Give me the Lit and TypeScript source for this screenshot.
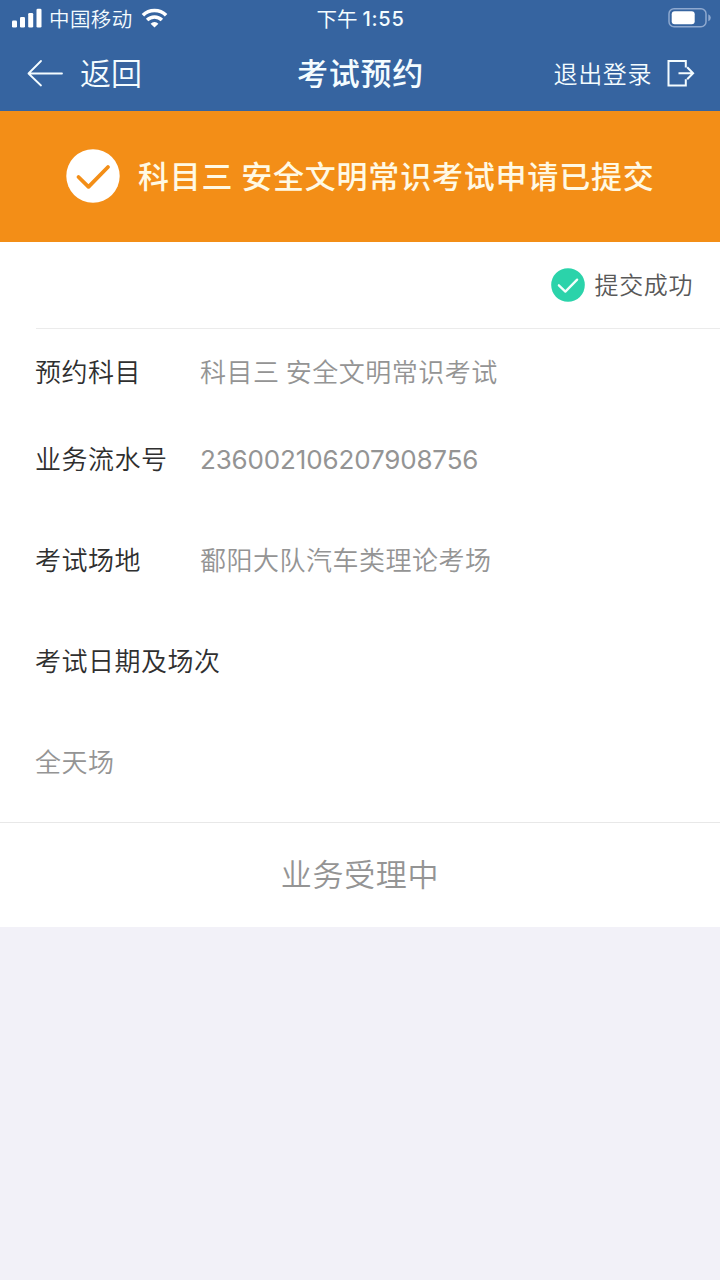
import { LitElement, html, css, svg } from "lit";
import { customElement } from "lit/decorators.js";

const rows = [
  { label: "预约科目", value: "科目三 安全文明常识考试", kind: "first" },
  { label: "业务流水号", value: "236002106207908756", kind: "number" },
  { label: "考试场地", value: "鄱阳大队汽车类理论考场", kind: "" },
  { label: "考试日期及场次", value: "", kind: "" },
];

@customElement("app-root")
export class AppRoot extends LitElement {
  static styles = css`
    :host {
      display: block;
      min-height: 1280px;
      background: #f2f1f8;
      font-family: "Noto Sans CJK SC", sans-serif;
      color: #2f2f2f;
    }
    * { box-sizing: border-box; }
    svg { display: block; flex: none; }
    .top { background: #3664a0; color: #f4fcff; height: 111px; }
    .status {
      height: 36px;
      display: grid;
      grid-template-columns: 1fr auto 1fr;
      align-items: center;
      padding: 0 9px 0 12px;
      font-size: 20.5px;
      line-height: 34px;
    }
    .carrier { display: flex; align-items: center; gap: 7px; }
    .carrier span { letter-spacing: 0.4px; font-weight: 350; padding-bottom: 1px; }
    .carrier .wifi { margin-left: 1px; }
    .time { display: flex; align-items: center; gap: 5px; padding-right: 2px; }
    .time span:first-child { padding-bottom: 1px; }
    .digits { font: 500 20px/34px Inter, sans-serif; letter-spacing: 0.7px; padding-top: 1px; }
    .status .battery { justify-self: end; }
    .nav {
      height: 75px;
      display: grid;
      grid-template-columns: 1fr auto 1fr;
      align-items: center;
      padding: 0 25px 2px 27px;
    }
    .back { display: flex; align-items: center; gap: 17px; font-size: 31px; line-height: 40px; font-weight: 350; }
    .title { font-size: 31px; line-height: 40px; font-weight: 500; letter-spacing: 0.7px; padding: 0 1px 2px 0; }
    .back span { padding-bottom: 2px; }
    .logout {
      display: flex; align-items: center; justify-content: flex-end; gap: 14px;
      font-size: 24px; line-height: 36px; letter-spacing: 0.6px; font-weight: 350;
    }
    .banner {
      height: 131px;
      background: #f38e17;
      color: #fff9e4;
      display: flex;
      align-items: center;
      padding-left: 66px;
      padding-bottom: 1px;
      gap: 18px;
      font-size: 31px;
      line-height: 44px;
      font-weight: 500;
      letter-spacing: 0.8px;
      white-space: nowrap;
    }
    .banner span { padding-bottom: 3px; }
    .card { background: #fff; height: 685px; }
    .result {
      height: 87px;
      margin-left: 36px;
      padding-right: 27px;
      border-bottom: 1px solid #ebebeb;
      display: flex;
      align-items: center;
      justify-content: flex-end;
      gap: 10px;
      color: #585858;
      font-size: 24px;
      line-height: 36px;
      letter-spacing: 0.6px;
      font-weight: 350;
    }
    .result span { padding-bottom: 2px; }
    .row {
      height: 101px;
      padding: 0 0 2px 35px;
      display: flex;
      align-items: center;
      font-size: 26px;
      line-height: 36px;
      letter-spacing: 0.5px;
      font-weight: 350;
      white-space: nowrap;
    }
    .row.first { height: 86px; }
    .row.number { height: 87px; margin-bottom: 7px; }
    .label { min-width: 165px; }
    .value, .session { color: #949494; }
    .row.number .value { font: 400 26px/36px Inter, sans-serif; letter-spacing: -0.15px; padding-top: 4px; }
    .foot {
      border-top: 1px solid #e8e8e8;
      height: 105px;
      margin-top: 10px;
      text-align: center;
      color: #949494;
      font-size: 31px;
      line-height: 100px;
      letter-spacing: 0.7px;
      font-weight: 350;
    }
  `;

  private check(size: number, disc: string, stroke: string, d: string, w: number) {
    return svg`<svg width=${size} height=${size} viewBox="0 0 54 54" fill="none">
      <circle cx="27" cy="27" r="26.7" fill=${disc} />
      <path d=${d} stroke=${stroke} stroke-width=${w} stroke-linecap="round" stroke-linejoin="round" />
    </svg>`;
  }

  render() {
    return html`
      <header class="top">
        <div class="status">
          <div class="carrier">
            <svg width="30" height="20" viewBox="0 0 30 20" fill="#fff">
              <rect x="0" y="12.5" width="5" height="7" rx="1.3" />
              <rect x="8" y="9" width="5" height="10.5" rx="1.3" />
              <rect x="16.2" y="5" width="5" height="14.5" rx="1.3" />
              <rect x="24.5" y="0.7" width="5" height="18.8" rx="1.3" />
            </svg>
            <span>中国移动</span>
            <svg class="wifi" width="27" height="20" viewBox="0 0 27 20" fill="none" stroke="#fff">
              <path d="M1.9 7.2a16.6 16.6 0 0 1 23.2 0" stroke-width="3.6" />
              <path d="M6.1 12a10.5 10.5 0 0 1 14.8 0" stroke-width="3.4" />
              <path d="M9.6 15.7a5.6 5.6 0 0 1 7.8 0L13.5 19.6z" fill="#fff" stroke="none" />
            </svg>
          </div>
          <div class="time"><span>下午</span><span class="digits">1:55</span></div>
          <svg class="battery" width="43" height="20" viewBox="0 0 43 20">
            <rect x="1" y="0.8" width="37" height="18" rx="5" fill="none" stroke="#8fa9cf" stroke-width="1.5" />
            <rect x="3.7" y="3.2" width="23" height="13" rx="3" fill="#fff" />
            <path d="M40.3 6.3q2.5 1 2.5 3.5t-2.5 3.5z" fill="#8fa9cf" />
          </svg>
        </div>
        <nav class="nav">
          <div class="back">
            <svg width="36" height="28" viewBox="0 0 36 28" fill="none" stroke="#f4fcff" stroke-width="1.8" stroke-linecap="round" stroke-linejoin="round">
              <path d="M35 14.5H1.5M14 2 1.5 14.5 14 26.5" />
            </svg>
            <span>返回</span>
          </div>
          <div class="title">考试预约</div>
          <div class="logout">
            <span>退出登录</span>
            <svg width="29" height="28" viewBox="0 0 29 28" fill="none" stroke="#f4fcff" stroke-width="2">
              <path d="M19.8 8.5V2H2.5v24.4h17.3v-6.2M12.5 14.3h14M21.2 8.3l5.9 6-5.9 6" />
            </svg>
          </div>
        </nav>
      </header>
      <section class="banner">
        ${this.check(54, "#fff", "#f38e17", "M12.5 28 22.5 37.8 42 18", 3.8)}
        <span>科目三 安全文明常识考试申请已提交</span>
      </section>
      <main class="card">
        <div class="result">
          ${this.check(34, "#2bd3aa", "#f2fffb", "M12.5 27.5 22.8 37.5 41.5 18.5", 3.6)}
          <span>提交成功</span>
        </div>
        ${rows.map(
          (r) => html`<div class="row ${r.kind}">
            <span class="label">${r.label}</span>${r.value ? html`<span class="value">${r.value}</span>` : ""}
          </div>`
        )}
        <div class="row"><span class="session">全天场</span></div>
        <div class="foot">业务受理中</div>
      </main>
    `;
  }
}
